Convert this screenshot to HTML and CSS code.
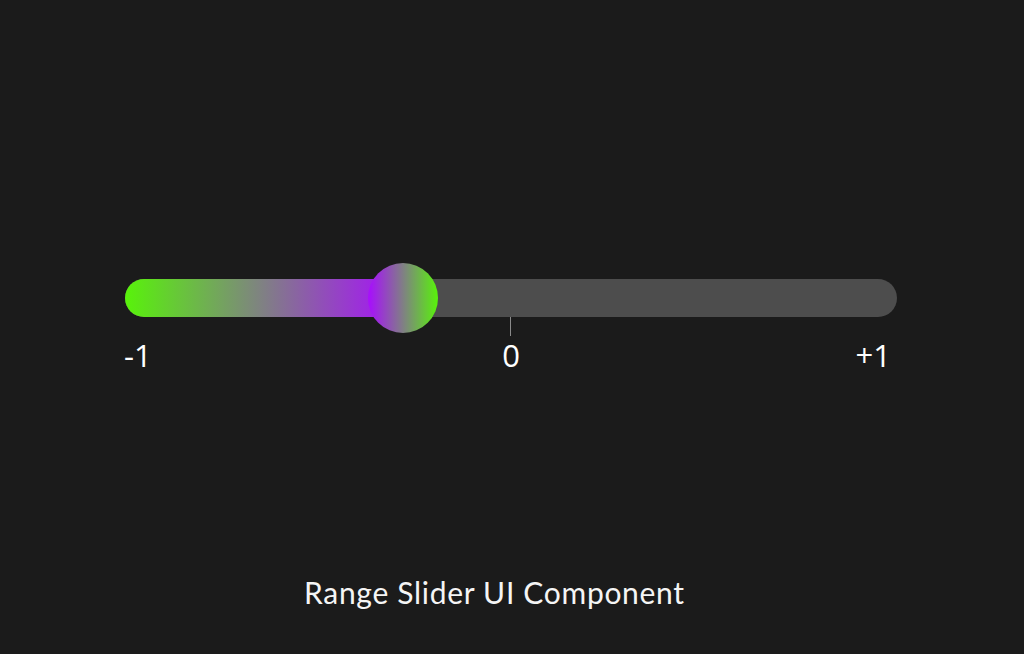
FILE: index.html
```html
<!DOCTYPE html>
<html>
<head>
<meta charset="utf-8">
<link rel="stylesheet" href="styles.css">
</head>
<body>
<main class="page">
  <section class="slider">
    <div class="track">
      <div class="fill"></div>
      <div class="thumb"></div>
    </div>
    <div class="tick"></div>
    <div class="labels">
      <span class="label label-start">-1</span>
      <span class="label label-mid">0</span>
      <span class="label label-end">+1</span>
    </div>
  </section>
  <h1 class="title">Range Slider UI Component</h1>
</main>
</body>
</html>
```
FILE: styles.css
```css
html, body {
  margin: 0;
  padding: 0;
  background: #1b1b1b;
  width: 1024px;
  height: 654px;
  overflow: hidden;
}
.page {
  display: flex;
  flex-direction: column;
  padding-top: 279px;
  padding-left: 125px;
}
.slider {
  width: 772px;
  display: flex;
  flex-direction: column;
}
.track {
  position: relative;
  height: 38px;
  border-radius: 19px;
  background: #4d4d4d;
}
.fill {
  width: 278px;
  height: 38px;
  border-radius: 19px 0 0 19px;
  background: linear-gradient(to right, #58f30a 0%, #a80cff 100%);
}
.thumb {
  position: absolute;
  left: 243px;
  top: -16px;
  width: 70px;
  height: 70px;
  border-radius: 50%;
  background: linear-gradient(to right, #a80cff 0%, #58f30a 100%);
}
.tick {
  width: 1px;
  height: 19px;
  margin-left: 385px;
  background: #8a8a8a;
}
.labels {
  display: grid;
  grid-template-columns: 1fr auto 1fr;
  margin-top: 1px;
  padding-right: 6px;
  font-family: "Open Sans", sans-serif;
  font-size: 31px;
  line-height: 36px;
  color: #ffffff;
}
.label-start {
  justify-self: start;
  margin-left: -1px;
}
.label-mid {
  justify-self: center;
  margin-left: 6px;
}
.label-end {
  justify-self: end;
}
.title {
  margin: 201px 0 0 179px;
  font-family: "Lato", sans-serif;
  font-weight: 400;
  font-size: 30px;
  line-height: 36px;
  color: #f5f5f5;
  letter-spacing: 0.7px;
}
```
